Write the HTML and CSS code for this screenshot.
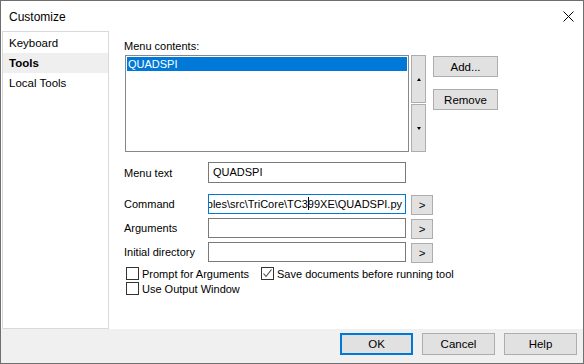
FILE: index.html
```html
<!DOCTYPE html>
<html lang="en">
<head>
    <meta charset="UTF-8">
    <title>Customize</title>
    <link rel="stylesheet" href="styles.css">
</head>
<body>
    <div class="window">
        <div class="titlebar">
            <span class="title">Customize</span>
            <svg class="close" width="11" height="11" viewBox="0 0 11 11">
                <path d="M0.5 0.5 L10.5 10.5 M10.5 0.5 L0.5 10.5" stroke="#000" stroke-width="1" fill="none"/>
            </svg>
        </div>

        <div class="main">
            <ul class="sidebar">
                <li>Keyboard</li>
                <li class="active">Tools</li>
                <li>Local Tools</li>
            </ul>

            <div class="content">
                <div class="caption">Menu contents:</div>
                <div class="list-row">
                    <div class="listbox">
                        <div class="item selected">QUADSPI</div>
                    </div>
                    <div class="scroller">
                        <div class="scroll-btn up"><span class="tri-up"></span></div>
                        <div class="scroll-btn down"><span class="tri-down"></span></div>
                    </div>
                    <div class="side-buttons">
                        <button class="btn">Add...</button>
                        <button class="btn remove">Remove</button>
                    </div>
                </div>

                <div class="field menu-text">
                    <label>Menu text</label>
                    <div class="input tall">QUADSPI</div>
                </div>

                <div class="field command">
                    <label>Command</label>
                    <div class="input focused"><span class="scrolled">C:\Examples\src\TriCore\TC3<span class="caret"></span>99XE\QUADSPI.py</span></div>
                    <button class="browse">&gt;</button>
                </div>

                <div class="field">
                    <label>Arguments</label>
                    <div class="input"></div>
                    <button class="browse">&gt;</button>
                </div>

                <div class="field">
                    <label>Initial directory</label>
                    <div class="input"></div>
                    <button class="browse">&gt;</button>
                </div>

                <div class="checks">
                    <div class="check-row">
                        <span class="check prompt"><span class="box"></span><span class="check-label">Prompt for Arguments</span></span>
                        <span class="check"><span class="box checked">
                            <svg width="11" height="11" viewBox="0 0 11 11"><path d="M1.5 5.5 L4 8.5 L9.5 1.5" stroke="#444" stroke-width="1.1" fill="none"/></svg>
                        </span><span class="check-label">Save documents before running tool</span></span>
                    </div>
                    <div class="check-row">
                        <span class="check"><span class="box"></span><span class="check-label">Use Output Window</span></span>
                    </div>
                </div>
            </div>
        </div>

        <div class="footer">
            <button class="btn wide default">OK</button>
            <button class="btn wide">Cancel</button>
            <button class="btn wide">Help</button>
        </div>
    </div>
</body>
</html>
```

FILE: styles.css
```css
* {
    box-sizing: border-box;
}
body {
    margin: 0;
    font-family: "Liberation Sans", Arial, sans-serif;
    font-size: 11px;
    color: #000;
    background-color: #fff;
}
.window {
    width: 584px;
    height: 364px;
    border: 1px solid #6f6f6f;
    background-color: #fff;
    display: flex;
    flex-direction: column;
}
.titlebar {
    height: 30px;
    display: flex;
    align-items: center;
    justify-content: space-between;
    padding: 0 9px 0 8px;
}
.title {
    font-size: 12px;
    padding-top: 1px;
}
.main {
    height: 298px;
    display: flex;
}
.sidebar {
    list-style: none;
    margin: 0 0 0 1px;
    padding: 1px 0 0 0;
    width: 107px;
    border: 1px solid #d9d9d9;
    font-size: 11.5px;
}
.sidebar li {
    height: 20px;
    line-height: 20px;
    padding-left: 6px;
}
.sidebar li.active {
    background-color: #efefef;
    font-weight: bold;
}
.content {
    flex: 1;
    padding: 8px 0 0 15px;
}
.caption {
    height: 15px;
    line-height: 15px;
}
.list-row {
    display: flex;
    margin-top: 1px;
}
.listbox {
    margin-left: 1px;
    width: 284px;
    height: 97px;
    border: 1px solid #828790;
    padding: 1px;
}
.item {
    height: 14px;
    line-height: 14px;
    padding-left: 1px;
}
.item.selected {
    background-color: #0078d7;
    color: #fff;
}
.scroller {
    margin-left: 2px;
    width: 15px;
    display: flex;
    flex-direction: column;
    gap: 1px;
}
.scroll-btn {
    height: 48px;
    background-color: #e1e1e1;
    border: 1px solid #adadad;
    display: flex;
    align-items: center;
    justify-content: center;
}
.tri-up {
    border-left: 2.5px solid transparent;
    border-right: 2.5px solid transparent;
    border-bottom: 3px solid #000;
}
.tri-down {
    border-left: 2.5px solid transparent;
    border-right: 2.5px solid transparent;
    border-top: 3px solid #000;
}
.side-buttons {
    margin-left: 7px;
    padding-top: 1px;
    display: flex;
    flex-direction: column;
    gap: 12px;
}
.btn {
    font-family: inherit;
    font-size: 11.5px;
    color: #000;
    width: 65px;
    height: 21px;
    padding: 0;
    background-color: #e1e1e1;
    border: 1px solid #adadad;
    border-radius: 0;
}
.field {
    display: flex;
    align-items: center;
    height: 20px;
    margin-top: 4px;
}
.field label {
    width: 84px;
}
.field.menu-text {
    height: 21px;
    margin-top: 10px;
}
.field.command {
    margin-top: 11px;
}
.input {
    width: 198px;
    height: 20px;
    border: 1px solid #7a7a7a;
    padding: 0 4px;
    line-height: 18px;
    white-space: nowrap;
    overflow: hidden;
}
.input.tall {
    height: 21px;
    line-height: 19px;
}
.input.focused {
    border-color: #0078d7;
    display: flex;
    justify-content: flex-end;
    padding-right: 3px;
}
.scrolled {
    flex-shrink: 0;
}
.caret {
    display: inline-block;
    width: 0;
    height: 13px;
    border-left: 1px solid #000;
    vertical-align: -2px;
    margin-right: -1px;
}
.browse {
    font-family: inherit;
    font-size: 11.5px;
    margin-left: 5px;
    margin-top: 2px;
    width: 22px;
    height: 20px;
    padding: 0;
    background-color: #e1e1e1;
    border: 1px solid #adadad;
    border-radius: 0;
}
.checks {
    margin-top: 4px;
    padding-left: 2px;
}
.check-row {
    display: flex;
    height: 15px;
    align-items: center;
}
.check {
    display: flex;
    align-items: center;
}
.check.prompt {
    width: 135px;
    overflow: hidden;
    white-space: nowrap;
}
.box {
    width: 13px;
    height: 13px;
    border: 1px solid #333;
    background-color: #fff;
    flex-shrink: 0;
    display: flex;
    align-items: center;
    justify-content: center;
}
.check-label {
    margin-left: 3px;
}
.footer {
    height: 34px;
    background-color: #f0f0f0;
    display: flex;
    justify-content: flex-end;
    align-items: flex-start;
    gap: 9px;
    padding: 4px 6px 0 0;
}
.btn.wide {
    width: 73px;
    height: 22px;
}
.btn.default {
    border: 2px solid #0078d7;
}
```
